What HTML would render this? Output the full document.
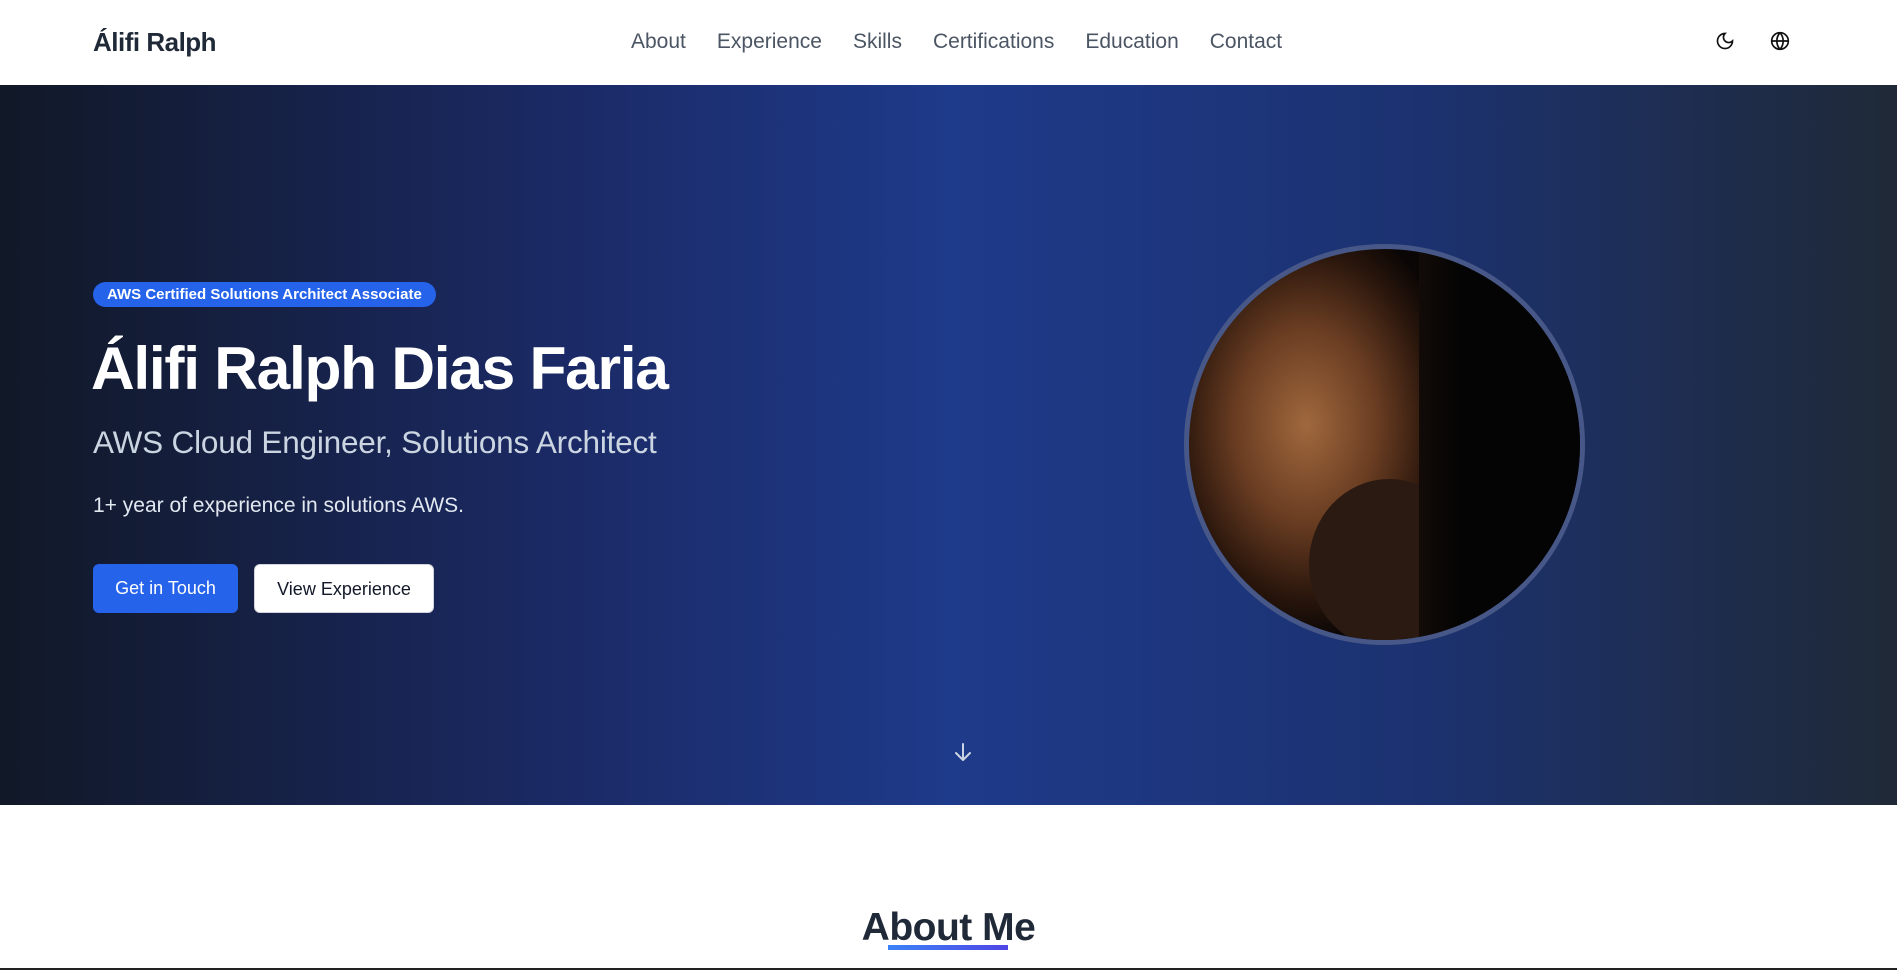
<!DOCTYPE html>
<html><head><meta charset="utf-8"><style>
*{margin:0;padding:0;box-sizing:border-box}
body{width:1897px;height:970px;overflow:hidden;background:#fff;font-family:"Liberation Sans",sans-serif;position:relative}
nav{position:absolute;top:0;left:0;width:1897px;height:85px;background:#fff}
.logo{position:absolute;left:93px;top:27px;font-size:26px;font-weight:bold;color:#1f2937;letter-spacing:-0.5px}
.links{position:absolute;left:631px;top:30px;font-size:21px;color:#4b5563;white-space:nowrap}
.links span{margin-right:31px}
.hero{position:absolute;top:85px;left:0;width:1897px;height:720px;background:linear-gradient(90deg,#111827 0%,#1b2a66 30%,#1e3a8a 50%,#1c3270 75%,#1f2937 100%)}
.badge{position:absolute;left:93px;top:282px;height:25px;padding:0 14px;border-radius:13px;background:#2563eb;color:#fff;font-size:15px;font-weight:bold;line-height:25px}
h1{position:absolute;left:91px;top:333px;font-size:60.5px;color:#fff;font-weight:bold;letter-spacing:-1.3px;white-space:nowrap}
.sub{position:absolute;left:93px;top:424px;font-size:31.5px;color:#cbd5e1;white-space:nowrap;letter-spacing:-0.2px}
.p{position:absolute;left:93px;top:494px;font-size:21px;color:#e2e8f0}
.b1,.b2{position:absolute;top:564px;height:49px;border-radius:6px;font-size:18px;line-height:49px;text-align:center}
.b1{left:93px;width:145px;background:#2563eb;color:#fff}
.b2{left:254px;width:180px;background:#fff;color:#111827;border:1px solid #d1d5db}
.photo{position:absolute;left:1184px;top:244px;width:401px;height:401px;border-radius:50%;border:5px solid #475888;overflow:hidden;background:radial-gradient(ellipse 40% 55% at 30% 45%,#a0683d 0%,#6a3d22 45%,#2a160c 80%,#0a0605 100%)}
.photo .dark{position:absolute;left:230px;top:0;width:200px;height:400px;background:linear-gradient(90deg,#120b08,#050404 20%)}
.photo .beard{position:absolute;left:120px;top:230px;width:160px;height:170px;border-radius:50%;background:#2a1a12}
h2{position:absolute;left:0;width:1897px;text-align:center;top:906px;font-size:39px;color:#1f2937;font-weight:bold;letter-spacing:-0.5px}
.ul{position:absolute;left:888px;top:945px;width:120px;height:5px;background:linear-gradient(90deg,#3b82f6,#4f46e5)}
.bot{position:absolute;left:0;top:968px;width:1897px;height:2px;background:#222}
</style></head><body>
<nav><div class="logo">Álifi Ralph</div>
<div class="links"><span>About</span><span>Experience</span><span>Skills</span><span>Certifications</span><span>Education</span><span style="margin:0">Contact</span></div>
<svg style="position:absolute;left:1715px;top:31px" width="20" height="20" viewBox="0 0 24 24" fill="none" stroke="#111" stroke-width="2" stroke-linecap="round"><path d="M12 3a6 6 0 0 0 9 9 9 9 0 1 1-9-9z"/></svg>
<svg style="position:absolute;left:1770px;top:31px" width="20" height="20" viewBox="0 0 24 24" fill="none" stroke="#111" stroke-width="2"><circle cx="12" cy="12" r="10"/><path d="M2 12h20M12 2a15 15 0 0 1 0 20M12 2a15 15 0 0 0 0 20"/></svg>
</nav>
<div class="hero">
</div>
<div class="badge">AWS Certified Solutions Architect Associate</div>
<h1>Álifi Ralph Dias Faria</h1>
<div class="sub">AWS Cloud Engineer, Solutions Architect</div>
<div class="p">1+ year of experience in solutions AWS.</div>
<div class="b1">Get in Touch</div>
<div class="b2">View Experience</div>
<div class="photo"><div class="beard"></div><div class="dark"></div></div>
<svg style="position:absolute;left:951px;top:740px" width="24" height="24" viewBox="0 0 24 24" fill="none" stroke="#cbd5e1" stroke-width="2" stroke-linecap="round" stroke-linejoin="round"><path d="M12 4v16M5 13l7 7 7-7"/></svg>
<h2>About Me</h2>
<div class="ul"></div>
<div class="bot"></div>
</body></html>
